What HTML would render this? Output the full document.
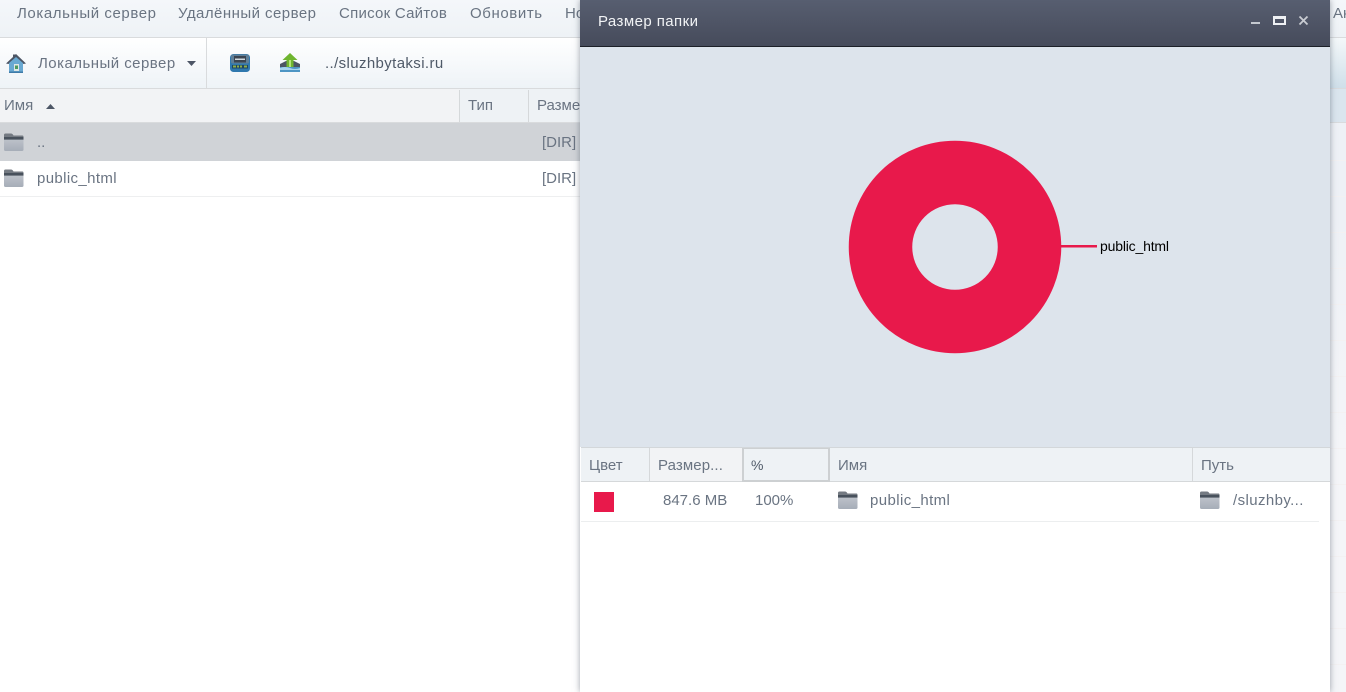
<!DOCTYPE html>
<html><head><meta charset="utf-8">
<style>
html,body{margin:0;padding:0;width:1346px;height:692px;overflow:hidden;background:#fff}
body{position:relative;font-family:"Liberation Sans",sans-serif;font-size:14px;color:#657080}
.a{position:absolute}
.t{position:absolute;white-space:nowrap;font-family:"Liberation Sans",sans-serif;font-size:15px;line-height:20px;color:#6a7482}
svg{position:absolute;display:block}
</style></head><body>
<svg width="0" height="0" style="position:absolute"><defs>
<linearGradient id="fg" x1="0" y1="0" x2="0" y2="1"><stop offset="0" stop-color="#bcc1c9"/><stop offset="1" stop-color="#a6adb8"/></linearGradient>
<symbol id="folder" viewBox="0 0 21 18"><path d="M1 2Q1 .5 2.500 .5H8Q9.500 .5 10.500 2.500H19.500Q20.500 2.500 20.500 4V6H1Z" fill="#747a82"/><rect x="1" y="4" width="19.500" height="2.800" fill="#48515c"/><path d="M1 6.800H20.500V16.500Q20.500 18 19 18H2.500Q1 18 1 16.500Z" fill="url(#fg)"/></symbol>
</defs></svg>

<!-- menu -->
<div class="a" style="left:0;top:0;width:1346px;height:37px;background:linear-gradient(#f4f7fa,#eef2f6)"></div>
<div class="a" style="left:0;top:37px;width:1346px;height:1px;background:#d9dbdd"></div>
<div class="t" style="left:17px;top:4px;letter-spacing:.58px">Локальный сервер</div>
<div class="t" style="left:178px;top:4px;letter-spacing:.46px">Удалённый сервер</div>
<div class="t" style="left:339px;top:4px;letter-spacing:.25px">Список Сайтов</div>
<div class="t" style="left:470px;top:4px;letter-spacing:.6px">Обновить</div>
<div class="t" style="left:565px;top:4px">Но</div>
<div class="t" style="left:1333px;top:4px">Ан</div>

<!-- toolbar -->
<div class="a" style="left:0;top:38px;width:1346px;height:50px;background:linear-gradient(#fff,#eef3f7)"></div>
<div class="a" style="left:1330px;top:38px;width:16px;height:50px;background:linear-gradient(#f4f8fa,#cfdfe9)"></div>
<div class="a" style="left:0;top:88px;width:1346px;height:1px;background:#d9dbdd"></div>
<div class="a" style="left:206px;top:38px;width:1px;height:50px;background:#d9dbdd"></div>
<svg style="left:5px;top:52px" width="22" height="22" viewBox="0 0 22 22"><path d="M1 11.500 8 5V2.500H10.500L11 2 21 11.500 18.500 12 11 5.500 3.500 12Z" fill="#4c5564"/><path d="M4 11 11 5 18 11V21H4Z" fill="#69a9d2"/><rect x="9" y="12" width="5" height="7" fill="#dfe6e4"/><rect x="10" y="13.500" width="3" height="3.500" fill="#4d9a62"/><rect x="4" y="19.500" width="14" height="1.500" fill="#3f7ba8"/></svg>
<div class="t" style="left:38px;top:54px;letter-spacing:.46px">Локальный сервер</div>
<svg style="left:187px;top:61px" width="10" height="6" viewBox="0 0 10 6"><path d="M0 0H9L4.500 5Z" fill="#4d5666"/></svg>
<svg style="left:230px;top:54px" width="20" height="18" viewBox="0 0 20 18"><rect x="0" y="0" width="20" height="18" rx="3.500" fill="#2f78ae"/><rect x="1" y=".5" width="18" height="9" rx="2" fill="#5f7f98"/><rect x="4" y="2" width="12" height="6.500" fill="#3b4450"/><rect x="5" y="4.500" width="10" height="1.500" fill="#cfd8de"/><rect x="2" y="11" width="16" height="3.500" fill="#1f4560"/><path d="M3 11.500h3v2H3zM7 11.500h2v2H7zM10 11.500h2v2h-2zM14 11.500h3v2h-3z" fill="#8fae4a"/></svg>
<svg style="left:280px;top:52px" width="21" height="21" viewBox="0 0 21 21"><path d="M0 13H20V20H0Z" fill="#4d95c4"/><path d="M0 12 6 9H14L20 12V15H0Z" fill="#4c5563"/><path d="M0 16Q5 14 10 16T20 16V18H0Z" fill="#a6d4ee"/><path d="M10 1 17.500 8H13.500V15H6.500V8H2.500Z" fill="#6fb52f"/><rect x="9" y="8" width="2" height="7" fill="#b6e37b"/></svg>
<div class="t" style="left:325px;top:54px;color:#4f5a68;letter-spacing:.38px">../sluzhbytaksi.ru</div>

<!-- list header -->
<div class="a" style="left:0;top:89px;width:460px;height:33px;background:#f2f3f5"></div>
<div class="a" style="left:460px;top:89px;width:870px;height:33px;background:#eef2f5"></div>
<div class="a" style="left:1330px;top:89px;width:16px;height:33px;background:#dae5ee"></div>
<div class="a" style="left:459px;top:90px;width:1px;height:32px;background:#d5d8da"></div>
<div class="a" style="left:528px;top:90px;width:1px;height:32px;background:#d5d8da"></div>
<div class="a" style="left:0;top:122px;width:1346px;height:1px;background:#d9dbdd"></div>
<div class="t" style="left:4px;top:96px">Имя</div>
<svg style="left:46px;top:103px" width="10" height="6" viewBox="0 0 10 6"><path d="M0 6H9L4.500 1Z" fill="#4d5666"/></svg>
<div class="t" style="left:468px;top:96px">Тип</div>
<div class="t" style="left:537px;top:96px">Размер</div>

<!-- rows -->
<div class="a" style="left:0;top:123px;width:1346px;height:38px;background:#d0d3d7"></div>
<div class="a" style="left:0;top:196px;width:1346px;height:1px;background:#eeeff0"></div>
<svg style="left:3px;top:133px" width="21" height="18"><use href="#folder"/></svg>
<div class="t" style="left:37px;top:133px">..</div>
<div class="t" style="left:542px;top:133px">[DIR]</div>
<svg style="left:3px;top:169px" width="21" height="18"><use href="#folder"/></svg>
<div class="t" style="left:37px;top:169px;letter-spacing:.37px">public_html</div>
<div class="t" style="left:542px;top:169px">[DIR]</div>

<!-- right strip -->
<div class="a" style="left:1330px;top:123px;width:16px;height:569px;background:linear-gradient(#eef1f6 0,#eef1f6 90px,#f4f5f8 330px);"></div>
<div class="a" style="left:1330px;top:160px;width:16px;height:532px;background:repeating-linear-gradient(#f3f1f2 0,#f3f1f2 1px,transparent 1px,transparent 36px)"></div>

<!-- window -->
<div class="a" style="left:580px;top:0;width:750px;height:692px;background:#fff;box-shadow:0 0 6px rgba(60,70,85,.5)"></div>
<div class="a" style="left:580px;top:0;width:750px;height:46px;background:linear-gradient(#575e70,#464b5b)"></div>
<div class="a" style="left:580px;top:46px;width:750px;height:1px;background:#1c2028"></div>
<div class="t" style="left:598px;top:12px;color:#f1f3f5;letter-spacing:.43px">Размер папки</div>
<div class="a" style="left:1251px;top:22px;width:9px;height:2px;background:#c4c8cf"></div>
<div class="a" style="left:1273px;top:16px;width:9px;height:4px;border:2px solid #eef0f3;border-top-width:3px"></div>
<svg style="left:1298px;top:15px" width="11" height="11" viewBox="0 0 11 11"><path d="M1.500 1.500 9.500 9.500M9.500 1.500 1.500 9.500" stroke="#c9ccd2" stroke-width="1.800"/></svg>

<!-- chart -->
<div class="a" style="left:580px;top:47px;width:750px;height:400px;background:#dde4ec"></div>
<svg style="left:580px;top:47px" width="750" height="400" viewBox="0 0 750 400">
<circle cx="375" cy="200" r="74.500" fill="none" stroke="#e8194b" stroke-width="63.500"/>
<rect x="480" y="198" width="37" height="2.500" fill="#e8194b"/>
<text x="520" y="204" font-family="Liberation Sans, sans-serif" font-size="14" textLength="69" fill="#000">public_html</text>
</svg>

<!-- table header -->
<div class="a" style="left:581px;top:447px;width:749px;height:1px;background:#d3d7da"></div>
<div class="a" style="left:581px;top:448px;width:749px;height:33px;background:#eef2f5"></div>
<div class="a" style="left:650px;top:448px;width:92px;height:33px;background:#f2f3f5"></div>
<div class="a" style="left:581px;top:481px;width:749px;height:1px;background:#d5d8da"></div>
<div class="a" style="left:649px;top:448px;width:1px;height:33px;background:#d5d8da"></div>
<div class="a" style="left:742px;top:448px;width:84px;height:31px;border:1px solid #cdd0d2;border-width:1px 2px 2px 2px"></div>
<div class="a" style="left:1192px;top:448px;width:1px;height:33px;background:#d5d8da"></div>
<div class="t" style="left:589px;top:456px">Цвет</div>
<div class="t" style="left:658px;top:456px;letter-spacing:.1px">Размер...</div>
<div class="t" style="left:751px;top:455px;color:#4f5a68;font-size:14px">%</div>
<div class="t" style="left:838px;top:456px">Имя</div>
<div class="t" style="left:1201px;top:456px">Путь</div>

<!-- table row -->
<div class="a" style="left:594px;top:492px;width:20px;height:20px;background:#e8194b"></div>
<div class="t" style="left:663px;top:491px">847.6 MB</div>
<div class="t" style="left:755px;top:491px">100%</div>
<svg style="left:837px;top:491px" width="21" height="18"><use href="#folder"/></svg>
<div class="t" style="left:870px;top:491px;letter-spacing:.4px">public_html</div>
<svg style="left:1199px;top:491px" width="21" height="18"><use href="#folder"/></svg>
<div class="t" style="left:1233px;top:491px;letter-spacing:.4px">/sluzhby...</div>
<div class="a" style="left:581px;top:521px;width:738px;height:1px;background:#eceeef"></div>
</body></html>
